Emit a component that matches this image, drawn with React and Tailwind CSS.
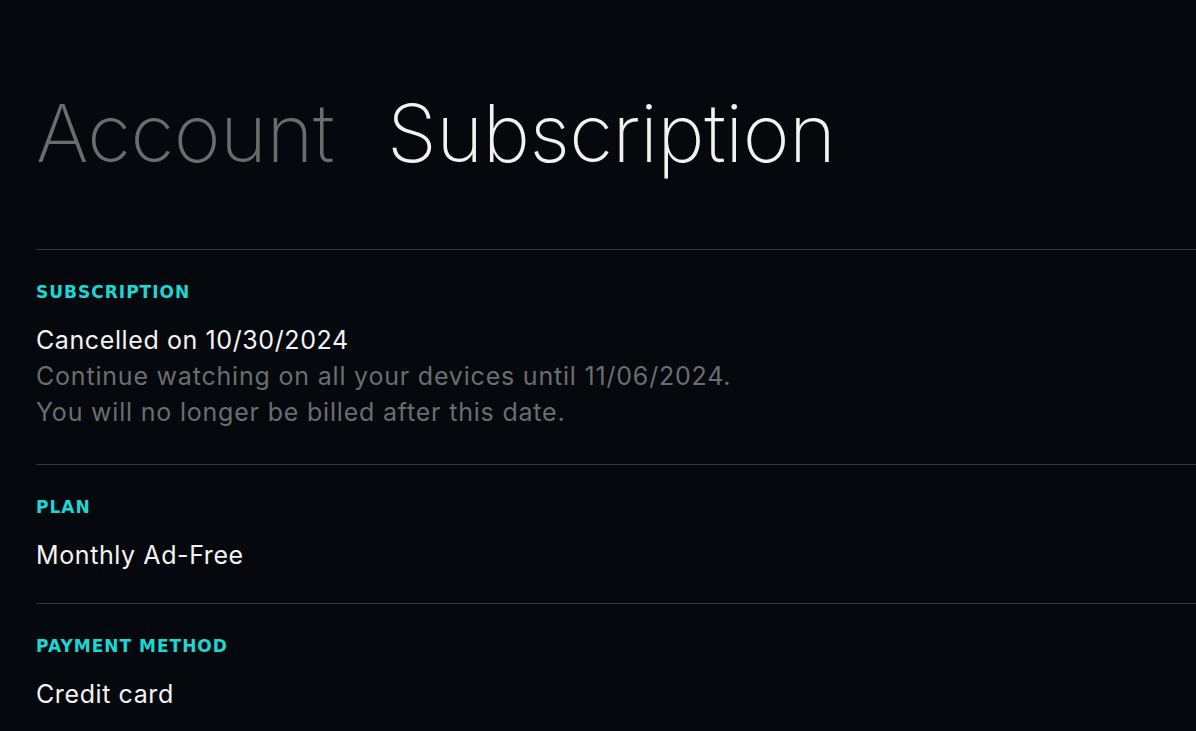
const sections = [
  {
    label: "SUBSCRIPTION",
    value: "Cancelled on 10/30/2024",
    notes: [
      "Continue watching on all your devices until 11/06/2024.",
      "You will no longer be billed after this date.",
    ],
    pad: "pb-[34px]",
  },
  { label: "PLAN", value: "Monthly Ad-Free", notes: [], pad: "pb-[30px]" },
  { label: "PAYMENT METHOD", value: "Credit card", notes: [], pad: "pb-[30px]" },
];

export default function App() {
  return (
    <div className="min-h-[731px] w-full overflow-hidden bg-[#05080c] pl-[36px] font-['Inter',sans-serif]">
      <header className="flex h-[249px] items-start gap-[53px] pt-[83px]">
        <h1 className="text-[80px] font-extralight leading-[100px] tracking-[-0.5px] text-[#6a6c6e]">
          Account
        </h1>
        <h1 className="text-[80px] font-extralight leading-[100px] tracking-[-0.5px] text-[#f2f2f2]">
          Subscription
        </h1>
      </header>

      {sections.map((s) => (
        <section key={s.label} className={`border-t border-[#343638] pt-[32px] ${s.pad}`}>
          <div className="font-['DejaVu_Sans',sans-serif] text-[17px] font-bold leading-[20px] tracking-[1px] text-[#1ad8d6]">
            {s.label}
          </div>
          <div className="mt-[20px] text-[25px] leading-[36px] tracking-[0.6px] text-[#f4f4f4]">
            {s.value}
          </div>
          {s.notes.map((n) => (
            <div key={n} className="text-[25px] leading-[36px] tracking-[0.8px] text-[#6b6d70]">
              {n}
            </div>
          ))}
        </section>
      ))}
    </div>
  );
}
